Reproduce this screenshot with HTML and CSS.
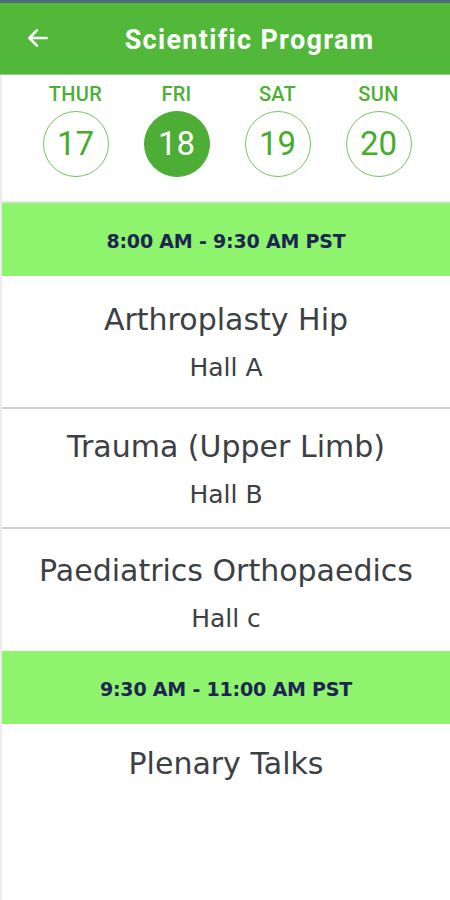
FILE: index.html
```html
<!DOCTYPE html>
<html>
<head>
<meta charset="utf-8">
<link rel="stylesheet" href="styles.css">
</head>
<body>
<div class="screen">
  <div class="statusbar"></div>
  <header class="appbar">
    <svg class="back" width="26" height="26" viewBox="0 0 24 24"><path d="M20 12H5M11 5l-7 7 7 7" fill="none" stroke="#fff" stroke-width="2.4" stroke-linecap="round" stroke-linejoin="round"/></svg>
    <h1 class="title">Scientific Program</h1>
  </header>
  <nav class="days">
    <div class="day"><span class="dname">THUR</span><span class="dnum">17</span></div>
    <div class="day active"><span class="dname">FRI</span><span class="dnum">18</span></div>
    <div class="day"><span class="dname">SAT</span><span class="dnum">19</span></div>
    <div class="day"><span class="dname">SUN</span><span class="dnum">20</span></div>
  </nav>
  <main class="list">
    <div class="slot">8:00 AM - 9:30 AM PST</div>
    <div class="item first"><div class="topic">Arthroplasty Hip</div><div class="hall">Hall A</div></div>
    <div class="item"><div class="topic">Trauma (Upper Limb)</div><div class="hall">Hall B</div></div>
    <div class="item last"><div class="topic">Paediatrics Orthopaedics</div><div class="hall">Hall c</div></div>
    <div class="slot">9:30 AM - 11:00 AM PST</div>
    <div class="item plain"><div class="topic">Plenary Talks</div></div>
  </main>
</div>
</body>
</html>
```
FILE: styles.css
```css
* { box-sizing: border-box; margin: 0; padding: 0; }
html, body { width: 450px; height: 900px; background: #fff; overflow: hidden; }
body { font-family: "Roboto", "Liberation Sans", sans-serif; }
.screen { width: 450px; height: 900px; display: flex; flex-direction: column; border-left: 2px solid #ececec; }
.statusbar { height: 3px; background: #4f6b73; margin-left: -2px; }
.appbar { height: 72px; background: #52b83a; display: flex; align-items: center; margin-left: -2px; padding-left: 25px; border-bottom: 1px solid #8fd47c; }
.back { flex: none; margin-top: -1px; }
.title { flex: 1; text-align: center; color: #fff; font-weight: 700; font-size: 27px; margin-left: -2px; margin-top: 2px; letter-spacing: 1.3px; }
.days { display: grid; grid-template-columns: repeat(4, 101px); padding: 6px 0 0 23px; height: 128px; border-bottom: 2px solid #e3e3e3; }
.day { display: flex; flex-direction: column; align-items: center; }
.dname { color: #4cb032; font-size: 20px; font-weight: 500; line-height: 26px; letter-spacing: 0.3px; }
.dnum { margin-top: 4px; width: 66px; height: 66px; border-radius: 50%; border: 1px solid #74c462; color: #45ad2c; font-size: 33px; display: flex; align-items: center; justify-content: center; padding-bottom: 2px; }
.active .dnum { background: #4cae34; color: #fff; border-color: #4cae34; }
.slot { height: 73px; background: #8ef46e; display: flex; align-items: center; justify-content: center; font-family: "DejaVu Sans", sans-serif; font-weight: 700; font-size: 19px; color: #1d2650; padding-top: 2px; letter-spacing: -0.2px; }
.item { display: flex; flex-direction: column; align-items: center; padding: 20px 0 17px; border-bottom: 2px solid #cfcfcf; color: #3c3f44; font-family: "DejaVu Sans", sans-serif; }
.item.first { padding: 26px 0 24px; }
.item.last { border-bottom: none; padding: 24px 0 17px; }
.item.plain { border-bottom: none; padding-top: 22px; }
.topic { font-size: 30px; line-height: 36px; }
.hall { font-size: 25px; line-height: 30px; margin-top: 15px; }
```
